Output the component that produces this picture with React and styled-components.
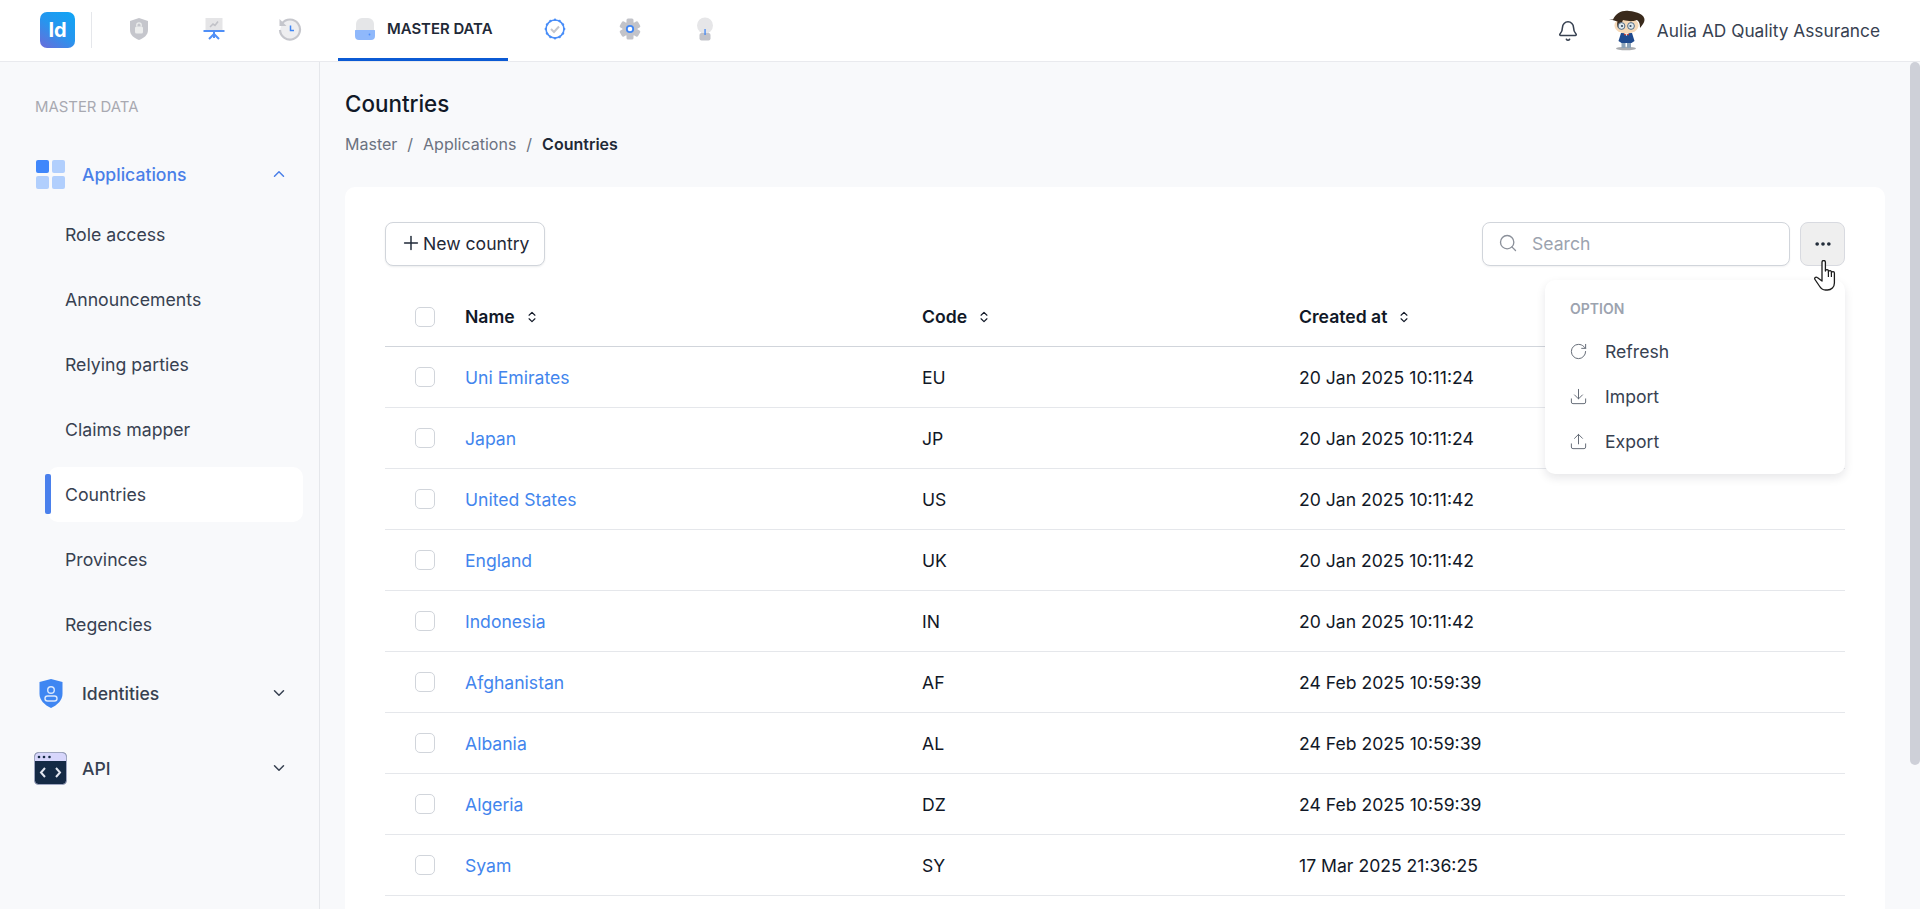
import React from "react";
import styled, { createGlobalStyle } from "styled-components";
import {
  Bell,
  ChevronDown,
  ChevronUp,
  ChevronsUpDown,
  Download,
  Ellipsis,
  Plus,
  RotateCw,
  Search,
  Upload,
} from "lucide-react";

const GlobalStyle = createGlobalStyle`
  html, body {
    margin: 0;
    height: 100%;
    overflow: hidden;
    background: #f8f9fb;
    font-family: Inter, "Liberation Sans", sans-serif;
    color: #111827;
  }
  * { box-sizing: border-box; }
`;

const Page = styled.div`
  height: 909px;
  display: flex;
  flex-direction: column;
  overflow: hidden;
`;

const Header = styled.header`
  height: 62px;
  flex: none;
  display: flex;
  align-items: stretch;
  padding: 0 40px;
  background: #fff;
  border-bottom: 1px solid #e9eaee;
`;

const Logo = styled.div`
  width: 35px;
  height: 36px;
  margin-top: 12px;
  border-radius: 7px;
  display: flex;
  align-items: center;
  justify-content: center;
  background: linear-gradient(35deg, #6c6bd9 0%, #2795ee 50%, #0ea5f5 100%);
  color: #fff;
  font-size: 20px;
  font-weight: 700;
`;

const Divider = styled.div`
  width: 1px;
  height: 36px;
  margin: 12px 0 0 16px;
  background: #e5e7eb;
`;

const Tabs = styled.nav`
  display: flex;
  gap: 19px;
  margin-left: 19px;
`;

const Tab = styled.div`
  height: 61px;
  padding: 0 ${(p) => (p.$active ? "16px" : "17px")};
  display: flex;
  align-items: center;
  gap: 11px;
  border-bottom: 3px solid ${(p) => (p.$active ? "#0b5ad4" : "transparent")};
  font-size: 14.9px;
  font-weight: 600;
  color: #1f2937;
`;

const UserArea = styled.div`
  margin-left: auto;
  display: flex;
  align-items: center;
`;

const BellButton = styled.div`
  display: flex;
  color: #374151;
  margin-right: 30px;
`;

const UserName = styled.span`
  margin-left: 12px;
  font-size: 17.3px;
  color: #374151;
`;

const Body = styled.div`
  flex: 1;
  min-height: 0;
  display: flex;
`;

const Sidebar = styled.aside`
  width: 320px;
  flex: none;
  padding: 35px 31px 0 34px;
  border-right: 1px solid #e5e7eb;
`;

const SideLabel = styled.div`
  height: 20px;
  margin: 0 0 28px 1px;
  font-size: 14.9px;
  line-height: 20px;
  color: #a8a9b1;
`;

const SectionRow = styled.div`
  height: 60px;
  padding-bottom: 2px;
  display: flex;
  align-items: center;
  margin-bottom: ${(p) => (p.$open ? "2px" : "15px")};
  font-size: 17.6px;
  font-weight: 500;
  color: ${(p) => (p.$open ? "#4a7fe8" : "#374151")};
`;

const SectionIcon = styled.div`
  width: 33px;
  margin-right: 15px;
  display: flex;
  justify-content: center;
`;

const SectionText = styled.span`
  flex: 1;
`;

const SubList = styled.div`
  display: flex;
  flex-direction: column;
  gap: 10px;
  margin: 0 -15px 12px 14px;
`;

const SubItem = styled.div`
  position: relative;
  height: 55px;
  padding-left: 17px;
  display: flex;
  align-items: center;
  border-radius: 10px;
  font-size: 17.7px;
  color: #374151;
  background: ${(p) => (p.$active ? "#fff" : "transparent")};
`;

const ActiveBar = styled.span`
  position: absolute;
  left: -3px;
  top: 7px;
  width: 6px;
  height: 40px;
  border-radius: 2px;
  background: #4a80ec;
`;

const Main = styled.main`
  flex: 1;
  min-width: 0;
  padding: 28px 25px 0;
  overflow: hidden;
`;

const Title = styled.h1`
  margin: 0;
  font-size: 22.4px;
  line-height: 28px;
  font-weight: 500;
  color: #111827;
`;

const Breadcrumb = styled.div`
  margin-top: 14px;
  height: 24px;
  display: flex;
  align-items: center;
  gap: 10px;
  font-size: 16px;
  color: #6b7280;
`;

const Current = styled.span`
  font-weight: 600;
  color: #1f2937;
`;

const Card = styled.section`
  margin-top: 31px;
  padding: 35px 40px 40px;
  border-radius: 10px;
  background: #fff;
`;

const Toolbar = styled.div`
  display: flex;
  align-items: center;
  justify-content: space-between;
  margin-bottom: 21px;
`;

const NewButton = styled.button`
  height: 44px;
  padding: 0 15px 2px 14px;
  display: flex;
  align-items: center;
  gap: 1px;
  border: 1px solid #d1d5db;
  border-radius: 8px;
  background: #fff;
  box-shadow: 0 1px 2px rgba(17, 24, 39, 0.08);
  font-family: inherit;
  font-size: 17.6px;
  color: #1f2937;
`;

const ToolGroup = styled.div`
  position: relative;
  display: flex;
  gap: 10px;
`;

const SearchBox = styled.label`
  width: 308px;
  height: 44px;
  padding: 0 15px 2px;
  display: flex;
  align-items: center;
  gap: 12px;
  border: 1px solid #d1d5db;
  border-radius: 8px;
  background: #fff;
  box-shadow: 0 1px 2px rgba(17, 24, 39, 0.06);
  color: #8b909a;
`;

const SearchInput = styled.input`
  flex: 1;
  min-width: 0;
  border: 0;
  outline: 0;
  font-family: inherit;
  font-size: 17.6px;
  &::placeholder {
    color: #9ca3af;
  }
`;

const MoreButton = styled.button`
  position: relative;
  width: 45px;
  height: 44px;
  padding: 0;
  display: flex;
  align-items: center;
  justify-content: center;
  border: 1px solid #d8dae0;
  border-radius: 8px;
  background: #efefef;
  color: #1f2937;
`;

const Cursor = styled.svg`
  position: absolute;
  left: 13px;
  top: 37px;
  z-index: 3;
`;

const Menu = styled.div`
  position: absolute;
  top: 58px;
  right: 0;
  z-index: 2;
  width: 300px;
  height: 194px;
  padding: 19px 25px 0;
  border-radius: 10px;
  background: #fff;
  box-shadow: 0 4px 10px rgba(17, 24, 39, 0.1);
`;

const MenuLabel = styled.div`
  height: 20px;
  margin-bottom: 10px;
  font-size: 14px;
  line-height: 20px;
  font-weight: 600;
  color: #9ca3af;
`;

const MenuItem = styled.div`
  height: 45px;
  display: flex;
  align-items: center;
  gap: 17px;
  font-size: 17.6px;
  color: #374151;
  svg {
    margin-left: -1px;
    color: #5f6672;
  }
`;

const Table = styled.table`
  width: 100%;
  border-collapse: separate;
  border-spacing: 0;
  table-layout: fixed;
`;

const Th = styled.th`
  width: ${(p) => p.$w || "auto"};
  height: 60px;
  padding: 0;
  text-align: left;
  font-size: 17.6px;
  font-weight: 600;
  color: #111827;
  border-bottom: 1px solid #d1d5db;
`;

const Td = styled.td`
  height: 61px;
  padding: 0;
  font-size: 17.6px;
  color: #111827;
  border-bottom: 1px solid #e5e7eb;
`;

const HeadCell = styled.div`
  display: flex;
  align-items: center;
  gap: 10px;
`;

const Check = styled.span`
  display: block;
  width: 20px;
  height: 20px;
  margin-left: 30px;
  border: 1px solid #d1d5db;
  border-radius: 5px;
  background: #fff;
`;

const CountryLink = styled.a`
  color: #4285ed;
  text-decoration: none;
`;

const Scrollbar = styled.div`
  width: 10px;
  flex: none;
`;

const Thumb = styled.div`
  height: 703px;
  border-radius: 5px;
  background: #ced0d8;
`;

const countries = [
  { name: "Uni Emirates", code: "EU", created: "20 Jan 2025 10:11:24" },
  { name: "Japan", code: "JP", created: "20 Jan 2025 10:11:24" },
  { name: "United States", code: "US", created: "20 Jan 2025 10:11:42" },
  { name: "England", code: "UK", created: "20 Jan 2025 10:11:42" },
  { name: "Indonesia", code: "IN", created: "20 Jan 2025 10:11:42" },
  { name: "Afghanistan", code: "AF", created: "24 Feb 2025 10:59:39" },
  { name: "Albania", code: "AL", created: "24 Feb 2025 10:59:39" },
  { name: "Algeria", code: "DZ", created: "24 Feb 2025 10:59:39" },
  { name: "Syam", code: "SY", created: "17 Mar 2025 21:36:25" },
];

const subItems = [
  "Role access",
  "Announcements",
  "Relying parties",
  "Claims mapper",
  "Countries",
  "Provinces",
  "Regencies",
];

const ShieldTabIcon = () => (
  <svg width="22" height="24" viewBox="0 0 22 24">
    <path d="M11 1l9 3v9c0 5-4 8-9 10C6 21 2 18 2 13V4z" fill="#c5c6cc" />
    <rect x="7" y="9.5" width="8" height="7" rx="1.5" fill="#eceded" />
    <path d="M8.8 9.5V8a2.2 2.2 0 0 1 4.4 0v1.5" fill="none" stroke="#eceded" strokeWidth="1.3" />
  </svg>
);

const BoardTabIcon = () => (
  <svg width="22" height="24" viewBox="0 0 22 24">
    <rect x="2.5" y="1" width="17" height="12" fill="#e5e5e7" />
    <path d="M7 10l3-3 2 1.5L15 4.5" fill="none" stroke="#c1c2c8" strokeWidth="1.6" />
    <rect x="0.5" y="13" width="21" height="2" fill="#4f8ff7" />
    <path d="M11 15v6M11 17l-5 5M11 17l5 5" stroke="#4f8ff7" strokeWidth="2" fill="none" />
  </svg>
);

const HistoryTabIcon = () => (
  <svg width="24" height="24" viewBox="0 0 24 24">
    <path d="M4 6.500A10 10 0 1 1 2 13" fill="#eeeef0" stroke="#c5c6cc" strokeWidth="2.200" />
    <path d="M1.500 2v7h7z" fill="#c5c6cc" />
    <path d="M12.500 8.500v5h3.500" fill="none" stroke="#3f86f5" strokeWidth="1.500" />
  </svg>
);

const DataTabIcon = () => (
  <svg width="22" height="22" viewBox="0 0 22 22">
    <path d="M8 0h6a6 6 0 0 1 6 6v6H2V6a6 6 0 0 1 6-6z" fill="#e5e6e8" />
    <path d="M1.500 12h19a.5.5 0 0 1 .5.5V18a4 4 0 0 1-4 4H5a4 4 0 0 1-4-4v-5.500a.5.5 0 0 1 .5-.5z" fill="#8fb8fb" />
    <circle cx="15.500" cy="16.500" r="0.900" fill="#4f8ff7" />
  </svg>
);

const BadgeTabIcon = () => (
  <svg width="22" height="24" viewBox="0 0 22 24">
    <circle cx="11" cy="12" r="9" fill="#fff" stroke="#4a8ef8" strokeWidth="1.6" />
    {Array.from({ length: 12 }, (_, i) => (
      <circle
        key={i}
        cx={11 + 9.2 * Math.cos((i * Math.PI) / 6)}
        cy={12 + 9.2 * Math.sin((i * Math.PI) / 6)}
        r="1.2"
        fill="#4a8ef8"
      />
    ))}
    <path d="M7 12l3 3 5-5.500" fill="none" stroke="#c5c6cc" strokeWidth="2" />
  </svg>
);

const GearTabIcon = () => (
  <svg width="22" height="24" viewBox="0 0 22 24">
    <circle cx="11" cy="12" r="7.500" fill="#c2c3c9" />
    {[0, 60, 120, 180, 240, 300].map((a) => (
      <rect key={a} x="7.500" y="1.500" width="7" height="5" rx="1.500" fill="#c2c3c9" transform={`rotate(${a} 11 12)`} />
    ))}
    <circle cx="11" cy="12" r="3.200" fill="#fff" stroke="#3f86f5" strokeWidth="1.800" />
  </svg>
);

const BulbTabIcon = () => (
  <svg width="22" height="24" viewBox="0 0 22 24">
    <circle cx="11" cy="8.500" r="8" fill="#e6e6e8" />
    <rect x="7" y="13" width="8" height="4" fill="#e6e6e8" />
    <rect x="5.500" y="16" width="11" height="7.500" rx="2" fill="#c2c3c9" />
    <rect x="10.400" y="12" width="1.300" height="6" fill="#3f86f5" />
  </svg>
);

const Avatar = () => (
  <svg width="36" height="41" viewBox="0 0 36 41">
    <ellipse cx="17" cy="38.500" rx="10" ry="1.800" fill="#a9abaf" />
    <rect x="12.500" y="31" width="4" height="7" fill="#8ba2b8" />
    <rect x="18" y="31" width="4" height="7" fill="#8ba2b8" />
    <path d="M12 23h11l2.500 8-3 2h-10l-3-2z" fill="#1f4a8e" />
    <path d="M15 23l2.500 3 2.500-3z" fill="#f4f4f4" />
    <path d="M15 23.500l2.500 1 2.500-1v2l-2.500-1-2.500 1z" fill="#c0392b" />
    <ellipse cx="17.500" cy="15.500" rx="12" ry="8" fill="#f6d9b8" />
    <path d="M0 9l4 .5C7 3 13 0 20 1c8 .5 16 4 15.500 9 0 3-2.500 5-4.500 8 0-4-.5-6-3-8-6 2-8 1-14 0-1 2-1.500 5-5 8-1-2-1-5-.5-6.500z" fill="#3a2a1c" />
    <circle cx="12.500" cy="16" r="3.400" fill="#dfe9ef" stroke="#46607a" strokeWidth="0.900" />
    <circle cx="22" cy="16" r="3.400" fill="#dfe9ef" stroke="#46607a" strokeWidth="0.900" />
    <circle cx="13" cy="16" r="1.100" fill="#3a4a5c" />
    <circle cx="21.500" cy="16" r="1.100" fill="#3a4a5c" />
  </svg>
);

const AppsIcon = () => (
  <svg width="29" height="29" viewBox="0 0 29 29">
    <rect x="0" y="0" width="13" height="13" rx="2" fill="#4087fb" />
    <rect x="16" y="0" width="13" height="13" rx="2" fill="#b1cffd" />
    <rect x="0" y="16" width="13" height="13" rx="2" fill="#b1cffd" />
    <rect x="16" y="16" width="13" height="13" rx="2" fill="#b1cffd" />
  </svg>
);

const IdentityIcon = () => (
  <svg width="24" height="29" viewBox="0 0 24 29">
    <path d="M12 0l11.500 3v12c0 6-5 11-11.500 14C5.500 26 .5 21 .5 15V3z" fill="#3f86f2" />
    <circle cx="12" cy="11" r="3.300" fill="none" stroke="#dbe8fd" strokeWidth="1.400" />
    <rect x="6" y="17" width="12" height="5" rx="2.500" fill="none" stroke="#dbe8fd" strokeWidth="1.400" />
  </svg>
);

const ApiIcon = () => (
  <svg width="33" height="33" viewBox="0 0 33 33">
    <rect x="0.500" y="0.500" width="32" height="32" rx="4" fill="#152a45" stroke="#9fa6c0" />
    <path d="M1 9V4.500A3.500 3.500 0 0 1 4.500 1h24A3.500 3.500 0 0 1 32 4.500V9z" fill="#d7d6fb" />
    <circle cx="5" cy="5" r="1.300" fill="#152a45" />
    <circle cx="10" cy="5" r="1.300" fill="#152a45" />
    <circle cx="15.500" cy="5" r="1.300" fill="#152a45" />
    <path d="M11 16l-4 4.500 4 4.500M22 16l4 4.500-4 4.500" fill="none" stroke="#e3e6f0" strokeWidth="2" />
  </svg>
);

const HandCursor = () => (
  <Cursor width="24" height="31" viewBox="0 0 24 31">
    <path
      d="M8 17V2.200a1.700 1.700 0 0 1 3.400 0V11a1.500 1.500 0 0 1 3 .3V12a1.500 1.500 0 0 1 3 .3V13a1.500 1.500 0 0 1 3 .3V23c0 4-3 7-7 7h-2c-3 0-4.500-1.500-6-4L1 19.500c-1-1.500.8-3.200 2.300-2L8 21z"
      fill="#fff"
      stroke="#1b1b1b"
      strokeWidth="1.300"
      strokeLinejoin="round"
    />
    <path d="M14.400 12v5M17.400 13v4" stroke="#1b1b1b" strokeWidth="1.200" />
  </Cursor>
);

const App = () => {
  return (
    <Page>
      <GlobalStyle />
      <Header>
        <Logo>Id</Logo>
        <Divider />
        <Tabs>
          <Tab><ShieldTabIcon /></Tab>
          <Tab><BoardTabIcon /></Tab>
          <Tab><HistoryTabIcon /></Tab>
          <Tab $active><DataTabIcon />MASTER DATA</Tab>
          <Tab><BadgeTabIcon /></Tab>
          <Tab><GearTabIcon /></Tab>
          <Tab><BulbTabIcon /></Tab>
        </Tabs>
        <UserArea>
          <BellButton><Bell size={22} strokeWidth={1.7} /></BellButton>
          <Avatar />
          <UserName>Aulia AD Quality Assurance</UserName>
        </UserArea>
      </Header>
      <Body>
        <Sidebar>
          <SideLabel>MASTER DATA</SideLabel>
          <SectionRow $open>
            <SectionIcon><AppsIcon /></SectionIcon>
            <SectionText>Applications</SectionText>
            <ChevronUp size={18} />
          </SectionRow>
          <SubList>
            {subItems.map((item) => (
              <SubItem key={item} $active={item === "Countries"}>
                {item === "Countries" && <ActiveBar />}
                {item}
              </SubItem>
            ))}
          </SubList>
          <SectionRow>
            <SectionIcon><IdentityIcon /></SectionIcon>
            <SectionText>Identities</SectionText>
            <ChevronDown size={18} />
          </SectionRow>
          <SectionRow>
            <SectionIcon><ApiIcon /></SectionIcon>
            <SectionText>API</SectionText>
            <ChevronDown size={18} />
          </SectionRow>
        </Sidebar>
        <Main>
          <Title>Countries</Title>
          <Breadcrumb>
            <span>Master</span>
            <span>/</span>
            <span>Applications</span>
            <span>/</span>
            <Current>Countries</Current>
          </Breadcrumb>
          <Card>
            <Toolbar>
              <NewButton><Plus size={22} strokeWidth={1.6} />New country</NewButton>
              <ToolGroup>
                <SearchBox>
                  <Search size={20} strokeWidth={1.6} />
                  <SearchInput placeholder="Search" />
                </SearchBox>
                <MoreButton>
                  <Ellipsis size={20} strokeWidth={2.4} />
                  <HandCursor />
                </MoreButton>
                <Menu>
                  <MenuLabel>OPTION</MenuLabel>
                  <MenuItem><RotateCw size={19} strokeWidth={1.2} />Refresh</MenuItem>
                  <MenuItem><Download size={19} strokeWidth={1.2} />Import</MenuItem>
                  <MenuItem><Upload size={19} strokeWidth={1.2} />Export</MenuItem>
                </Menu>
              </ToolGroup>
            </Toolbar>
            <Table>
              <thead>
                <tr>
                  <Th $w="80px"><Check /></Th>
                  <Th $w="457px"><HeadCell>Name <ChevronsUpDown size={14} strokeWidth={2} /></HeadCell></Th>
                  <Th $w="377px"><HeadCell>Code <ChevronsUpDown size={14} strokeWidth={2} /></HeadCell></Th>
                  <Th><HeadCell>Created at <ChevronsUpDown size={14} strokeWidth={2} /></HeadCell></Th>
                </tr>
              </thead>
              <tbody>
                {countries.map((c) => (
                  <tr key={c.code}>
                    <Td><Check /></Td>
                    <Td><CountryLink href="#">{c.name}</CountryLink></Td>
                    <Td>{c.code}</Td>
                    <Td>{c.created}</Td>
                  </tr>
                ))}
              </tbody>
            </Table>
          </Card>
        </Main>
        <Scrollbar><Thumb /></Scrollbar>
      </Body>
    </Page>
  );
};

export default App;
